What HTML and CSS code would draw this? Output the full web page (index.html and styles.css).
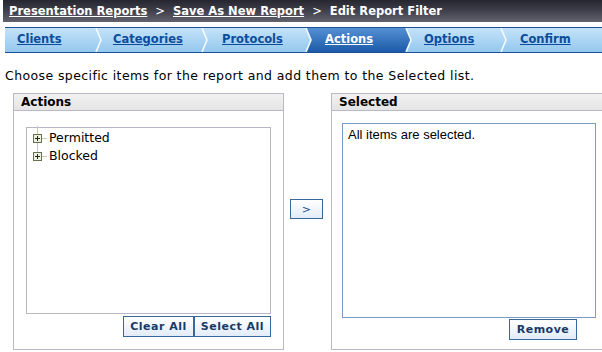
FILE: index.html
```html
<!DOCTYPE html>
<html lang="en">
<head>
  <meta charset="UTF-8">
  <title>Edit Report Filter</title>
  <link rel="stylesheet" href="styles.css">
</head>
<body>
  <svg class="defs" width="0" height="0">
    <defs>
      <linearGradient id="gLight" x1="0" y1="0" x2="0" y2="1">
        <stop offset="0" stop-color="#c4e2f8"/>
        <stop offset="1" stop-color="#94c8ee"/>
      </linearGradient>
      <linearGradient id="gDark" x1="0" y1="0" x2="0" y2="1">
        <stop offset="0" stop-color="#5590d4"/>
        <stop offset="1" stop-color="#1c5aa8"/>
      </linearGradient>
    </defs>
  </svg>

  <div class="titlebar">
    <a href="#">Presentation Reports</a>
    <span class="sep">&gt;</span>
    <a href="#">Save As New Report</a>
    <span class="sep">&gt;</span>
    <span>Edit Report Filter</span>
  </div>

  <div class="tabs">
    <div class="tab t1"><a href="#">Clients</a></div>
    <svg class="chev" width="8" height="24" viewBox="0 0 8 24">
      <rect width="8" height="24" fill="url(#gLight)"/>
      <polyline points="1,0 6,12 1,24" fill="none" stroke="#f4fbff" stroke-width="1.6"/>
    </svg>
    <div class="tab t2"><a href="#">Categories</a></div>
    <svg class="chev" width="8" height="24" viewBox="0 0 8 24">
      <rect width="8" height="24" fill="url(#gLight)"/>
      <polyline points="1,0 6,12 1,24" fill="none" stroke="#f4fbff" stroke-width="1.6"/>
    </svg>
    <div class="tab t3"><a href="#">Protocols</a></div>
    <svg class="chev" width="8" height="24" viewBox="0 0 8 24">
      <rect width="8" height="24" fill="url(#gDark)"/>
      <polygon points="0,0 1,0 6,12 1,24 0,24" fill="url(#gLight)"/>
      <polyline points="1,0 6,12 1,24" fill="none" stroke="#f4fbff" stroke-width="1.6"/>
    </svg>
    <div class="tab t4 active"><a href="#">Actions</a></div>
    <svg class="chev" width="8" height="24" viewBox="0 0 8 24">
      <rect width="8" height="24" fill="url(#gLight)"/>
      <polygon points="0,0 1,0 6,12 1,24 0,24" fill="url(#gDark)"/>
      <polyline points="1,0 6,12 1,24" fill="none" stroke="#f4fbff" stroke-width="1.6"/>
    </svg>
    <div class="tab t5"><a href="#">Options</a></div>
    <svg class="chev" width="8" height="24" viewBox="0 0 8 24">
      <rect width="8" height="24" fill="url(#gLight)"/>
      <polyline points="1,0 6,12 1,24" fill="none" stroke="#f4fbff" stroke-width="1.6"/>
    </svg>
    <div class="tab t6"><a href="#">Confirm</a></div>
  </div>

  <p class="intro">Choose specific items for the report and add them to the Selected list.</p>

  <div class="picker">
    <div class="panel left">
      <div class="panel-head">Actions</div>
      <div class="panel-body">
        <div class="listbox tree">
          <div class="node">
            <span class="plus"></span><span class="stub"></span>Permitted
          </div>
          <div class="node">
            <span class="plus"></span><span class="stub"></span>Blocked
          </div>
        </div>
        <div class="actions">
          <button class="btn">Clear All</button><button class="btn">Select All</button>
        </div>
      </div>
    </div>

    <div class="middle">
      <button class="btn move">&gt;</button>
    </div>

    <div class="panel right">
      <div class="panel-head">Selected</div>
      <div class="panel-body">
        <div class="listbox selected">All items are selected.</div>
        <div class="actions">
          <button class="btn">Remove</button>
        </div>
      </div>
    </div>
  </div>
</body>
</html>
```

FILE: styles.css
```css
* {
  box-sizing: border-box;
}

body {
  margin: 0;
  font-family: 'DejaVu Sans', Verdana, sans-serif;
  font-size: 12px;
  color: #000;
  background: #fff;
  overflow: hidden;
}

.defs {
  position: absolute;
}

.titlebar {
  margin-left: 3px;
  height: 22px;
  padding: 3px 0 0 6px;
  background: linear-gradient(#262630, #3e3e4a 45%, #62626e);
  color: #fff;
  font-weight: bold;
  font-size: 11.5px;
  line-height: 16px;
  white-space: nowrap;
}

.titlebar a {
  color: #fff;
}

.titlebar .sep {
  margin: 0 4px;
  font-weight: normal;
}

.tabs {
  display: flex;
  margin: 5px 0 0 5px;
  height: 26px;
  border-top: 1px solid #1d4f96;
  border-bottom: 1px solid #1d4f96;
  background: #fff;
}

.tab {
  height: 24px;
  padding-top: 4px;
  background: linear-gradient(#c4e2f8, #94c8ee);
  font-weight: bold;
  font-size: 11.5px;
  white-space: nowrap;
}

.tab a {
  color: #0d4c9c;
}

.tab.active {
  background: linear-gradient(#5590d4, #1c5aa8);
}

.tab.active a {
  color: #fff;
}

.chev {
  display: block;
  flex: none;
}

.t1 { width: 90px; padding-left: 12px; }
.t2 { width: 98px; padding-left: 10px; }
.t3 { width: 96px; padding-left: 13px; }
.t4 { width: 92px; padding-left: 12px; }
.t5 { width: 87px; padding-left: 11px; }
.t6 { flex: 1; padding-left: 12px; }

.intro {
  margin: 15px 0 0 5px;
  font-size: 12.5px;
  line-height: 15px;
  letter-spacing: 0.4px;
  white-space: nowrap;
}

.picker {
  display: flex;
  margin: 10px 0 0 13px;
}

.panel {
  border: 1px solid #b9b9c9;
  height: 257px;
  flex: none;
}

.panel.left {
  width: 271px;
}

.panel.right {
  width: 275px;
  border-right: none;
}

.panel-head {
  height: 17px;
  padding: 1px 0 0 7px;
  background: linear-gradient(#f2f2f2, #e4e4e4);
  border-bottom: 1px solid #b9b9c9;
  font-weight: bold;
  line-height: 15px;
}

.panel-body {
  display: flex;
  flex-direction: column;
}

.left .panel-body {
  padding: 16px 12px 0 12px;
}

.right .panel-body {
  padding: 12px 10px 0 10px;
}

.listbox {
  border: 1px solid #b6b6c6;
  background: #fff;
}

.tree {
  height: 187px;
  padding: 1px 0 0 6px;
  font-size: 12.5px;
}

.selected {
  height: 195px;
  border-color: #7a9cc4;
  padding: 3px 5px;
  font-family: 'Liberation Sans', Arial, sans-serif;
  font-size: 13px;
}

.node {
  position: relative;
  height: 18px;
  line-height: 18px;
  display: flex;
  align-items: center;
}

.node::before {
  content: "";
  position: absolute;
  left: 4px;
  top: -3px;
  bottom: 0;
  border-left: 1px solid #cfc8a8;
}

.node:last-child::before {
  bottom: 9px;
}

.plus {
  position: relative;
  z-index: 1;
  width: 9px;
  height: 9px;
  border: 1px solid #65704f;
  background:
    linear-gradient(#1f2a14, #1f2a14) center / 5px 1px no-repeat,
    linear-gradient(#1f2a14, #1f2a14) center / 1px 5px no-repeat,
    #eef0e6;
}

.stub {
  width: 5px;
  margin-right: 2px;
  border-top: 1px solid #cfc8a8;
}

.actions {
  display: flex;
  justify-content: flex-end;
}

.left .actions {
  margin-top: 2px;
}

.right .actions {
  margin-top: 1px;
  padding-right: 19px;
}

.btn {
  height: 21px;
  padding: 0;
  border: 1px solid #37689e;
  background: linear-gradient(#ffffff, #e2ecf8);
  color: #173a68;
  font-family: 'DejaVu Sans', Verdana, sans-serif;
  font-size: 11px;
  font-weight: bold;
  letter-spacing: 0.5px;
  white-space: nowrap;
  cursor: pointer;
}

.left .btn {
  width: 71px;
}

.left .btn + .btn {
  width: 77px;
}

.right .btn {
  width: 68px;
}

.middle {
  width: 47px;
  flex: none;
  display: flex;
  justify-content: center;
  padding: 106px 2px 0 0;
}

.btn.move {
  width: 33px;
  height: 20px;
  padding: 0;
  font-weight: normal;
  color: #1c4f8a;
}
```
